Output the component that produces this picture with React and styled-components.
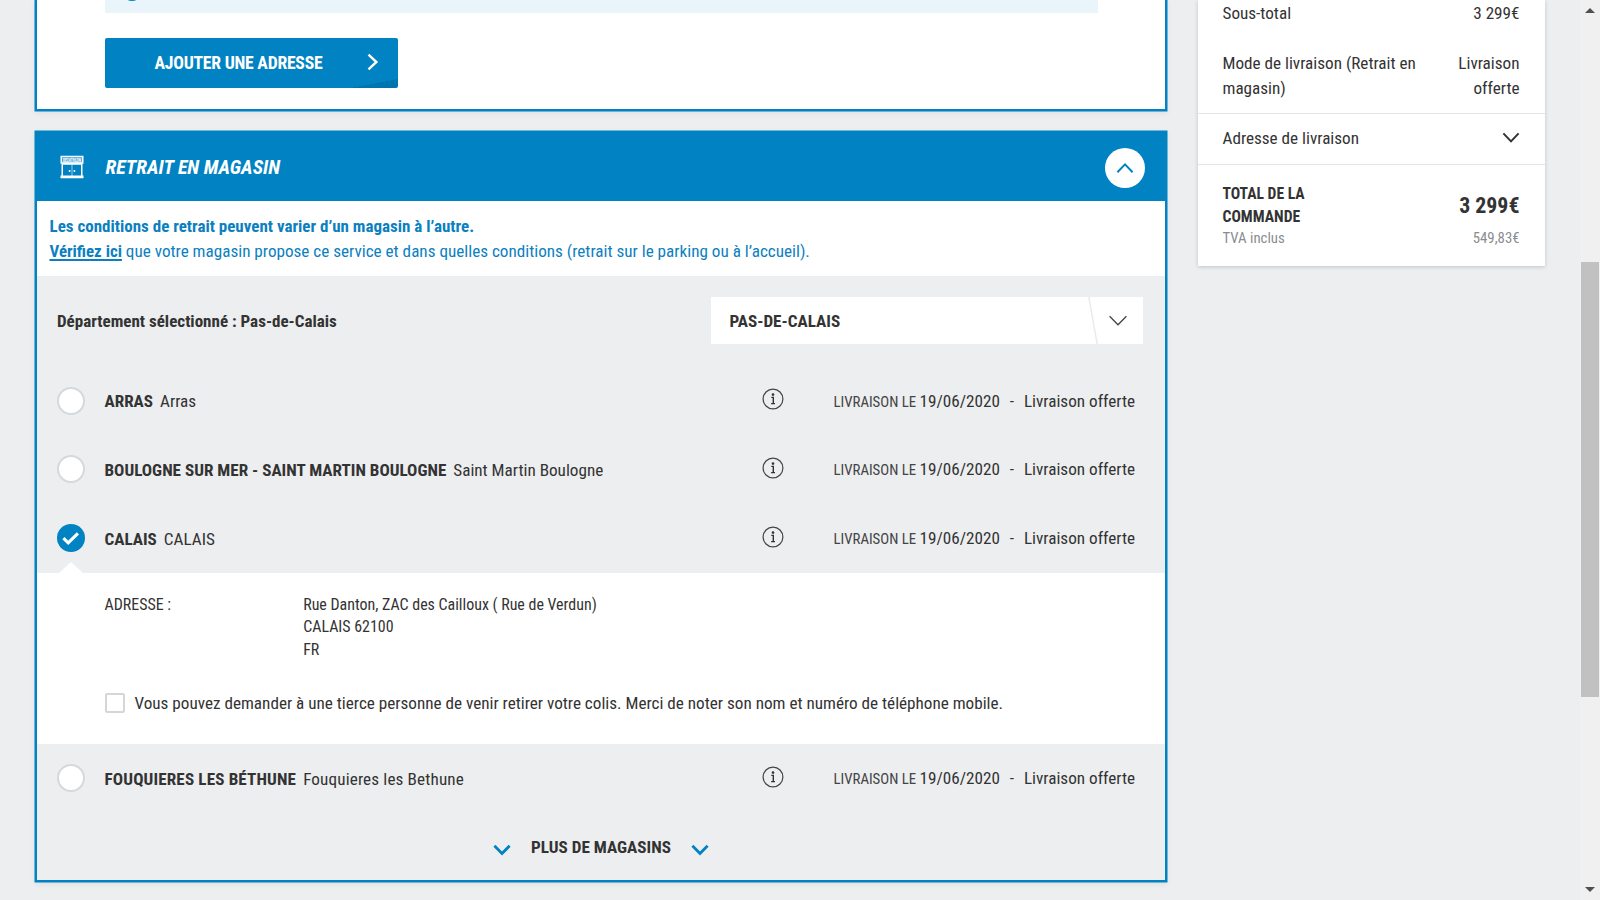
import React, { useState } from "react";
import styled, { createGlobalStyle, css } from "styled-components";

const stores = [
  { id: "arras", name: "ARRAS", city: "Arras" },
  {
    id: "boulogne",
    name: "BOULOGNE SUR MER - SAINT MARTIN BOULOGNE",
    city: "Saint Martin Boulogne"
  },
  {
    id: "calais",
    name: "CALAIS",
    city: "CALAIS",
    address: [
      "Rue Danton, ZAC des Cailloux ( Rue de Verdun)",
      "CALAIS 62100",
      "FR"
    ]
  },
  {
    id: "fouquieres",
    name: "FOUQUIERES LES BÉTHUNE",
    city: "Fouquieres les Bethune",
    tracking: "0.14px"
  }
];

function Chevron({ d, w, h, color, stroke }) {
  return (
    <Glyph width={w} height={h} viewBox={`0 0 ${w} ${h}`}>
      <path d={d} fill="none" stroke={color} strokeWidth={stroke} />
    </Glyph>
  );
}

function StoreIcon() {
  return (
    <Glyph width="24" height="24" viewBox="0 0 24 24">
      <path d="M0.5 0.8H23.5V8.8H22.5V20.5H23.5V23.2H0.5V20.5H1.5V8.8H0.5Z" fill="#fff" />
      <rect x="2" y="2.2" width="20" height="5" fill="#4ba5d4" />
      <text
        x="12"
        y="6.5"
        fontSize="5"
        fontWeight="700"
        fill="#fff"
        textAnchor="middle"
        textLength="18"
        lengthAdjust="spacingAndGlyphs"
      >
        DECATHLON
      </text>
      <path d="M3 9.8H11.7V20.5H3ZM12.3 9.8H21V20.5H12.3Z" fill="#0082c3" />
      <path d="M8.6 16H10.6M13.4 16H15.4M9.6 15V17M14.4 15V17" stroke="#fff" strokeWidth="1" />
    </Glyph>
  );
}

function InfoIcon() {
  return (
    <Glyph width="22" height="22" viewBox="0 0 22 22">
      <circle cx="11" cy="11" r="9.9" fill="none" stroke="#444" strokeWidth="1.2" />
      <circle cx="11" cy="6.6" r="1.3" fill="#333" />
      <path d="M9.3 9.4H11.3V15.4M9.1 15.6H13" fill="none" stroke="#333" strokeWidth="1.4" />
    </Glyph>
  );
}

function Store({ store, checked, onSelect }) {
  return (
    <StoreRow onClick={onSelect}>
      <Radio $checked={checked}>
        {checked && (
          <Glyph width="28" height="28" viewBox="0 0 28 28">
            <path d="M6.4 14.2L11.2 18.8L20.9 9.4" fill="none" stroke="#fff" strokeWidth="3.2" />
          </Glyph>
        )}
      </Radio>
      <StoreName $tracking={store.tracking}>
        <strong>{store.name}</strong>
        <span>{store.city}</span>
      </StoreName>
      <InfoCell>
        <InfoIcon />
      </InfoCell>
      <Shipping>
        <small>LIVRAISON LE</small>
        <span>19/06/2020</span>
        <Dash>-</Dash>
        <span>Livraison offerte</span>
      </Shipping>
      {checked && <Pointer />}
    </StoreRow>
  );
}

function App() {
  const [selected, setSelected] = useState("calais");

  return (
    <>
      <GlobalStyle />
      <Page>
        <Main>
          <AddressPanel>
            <Notice>
              <NoticeDot />
            </Notice>
            <AddButton>
              AJOUTER UNE ADRESSE
              <Chevron w={12} h={18} d="M1.5 1.6L9.4 9L1.5 16.4" color="#fff" stroke={2.4} />
            </AddButton>
          </AddressPanel>

          <Panel>
            <PanelHeader>
              <StoreIcon />
              <PanelTitle>RETRAIT EN MAGASIN</PanelTitle>
              <Toggle>
                <Chevron w={18} h={12} d="M1.4 10.2L9 2.4L16.6 10.2" color="#0082c3" stroke={2} />
              </Toggle>
            </PanelHeader>
            <Conditions>
              <p>
                <strong>Les conditions de retrait peuvent varier d’un magasin à l’autre.</strong>
              </p>
              <p>
                <CheckLink>Vérifiez ici</CheckLink> que votre magasin propose ce service et dans
                quelles conditions (retrait sur le parking ou à l’accueil).
              </p>
            </Conditions>
            <Department>
              <strong>Département sélectionné : Pas-de-Calais</strong>
              <Select>
                PAS-DE-CALAIS
                <SelectArrow>
                  <Glyph width="10" height="47" viewBox="0 0 10 47">
                    <path d="M0.8 0L9.2 47" stroke="#e9ebed" strokeWidth="1.5" />
                  </Glyph>
                  <Chevron w={18} h={12} d="M0.6 1.2L9 9.8L17.4 1.2" color="#444" stroke={1.3} />
                </SelectArrow>
              </Select>
            </Department>
            {stores.map(store => (
              <React.Fragment key={store.id}>
                <Store
                  store={store}
                  checked={selected === store.id}
                  onSelect={() => setSelected(store.id)}
                />
                {selected === store.id && store.address && (
                  <Details>
                    <Address>
                      <dt>ADRESSE :</dt>
                      <dd>
                        {store.address.map(line => (
                          <div key={line}>{line}</div>
                        ))}
                      </dd>
                    </Address>
                    <ThirdParty>
                      <Checkbox />
                      Vous pouvez demander à une tierce personne de venir retirer votre colis. Merci
                      de noter son nom et numéro de téléphone mobile.
                    </ThirdParty>
                  </Details>
                )}
              </React.Fragment>
            ))}
            <MoreStores>
              <Chevron w={18} h={12} d="M1.4 1.8L9 9.4L16.6 1.8" color="#0082c3" stroke={2.8} />
              PLUS DE MAGASINS
              <Chevron w={18} h={12} d="M1.4 1.8L9 9.4L16.6 1.8" color="#0082c3" stroke={2.8} />
            </MoreStores>
          </Panel>
        </Main>

        <Summary>
          <Lines>
            <Line>
              <span>Sous-total</span>
              <span>3 299€</span>
            </Line>
            <Line>
              <span>Mode de livraison (Retrait en magasin)</span>
              <span>Livraison offerte</span>
            </Line>
          </Lines>
          <DeliveryAddress>
            Adresse de livraison
            <Chevron w={18} h={12} d="M1.4 1.4L9 9.4L16.6 1.4" color="#333" stroke={2} />
          </DeliveryAddress>
          <Total>
            <TotalRow>
              <TotalLabel>TOTAL DE LA COMMANDE</TotalLabel>
              <TotalPrice>3 299€</TotalPrice>
            </TotalRow>
            <Vat>
              <span>TVA inclus</span>
              <span>549,83€</span>
            </Vat>
          </Total>
        </Summary>

        <Scrollbar>
          <ScrollArrow $up />
          <Thumb />
          <ScrollArrow />
        </Scrollbar>
      </Page>
    </>
  );
}

const GlobalStyle = createGlobalStyle`
  * {
    box-sizing: border-box;
  }

  body {
    margin: 0;
    background: #eceef0;
    color: #333;
    font-family: "Roboto Condensed", Roboto, "Liberation Sans", sans-serif;
    font-stretch: 75%;
    font-size: 17.15px;
    line-height: 25px;
    overflow: hidden;
  }

  p, dl, dd, h2 {
    margin: 0;
  }
`;

const Glyph = styled.svg`
  display: block;
  flex: none;
  overflow: visible;
`;

const Page = styled.div`
  display: flex;
  align-items: flex-start;
  height: 900px;
  padding-left: 35px;
  overflow: hidden;
`;

const Main = styled.main`
  width: 1132px;
`;

const Panel = styled.section`
  margin-bottom: 20px;
  border: 2px solid #0082c3;
  background: #eceef0;
  box-shadow: 0 0 0 0.5px #0082c3, 0 2px 6px rgba(0, 0, 0, 0.07);
`;

const AddressPanel = styled(Panel)`
  height: 111px;
  padding: 0 67.5px 0 68px;
  border-top: 0;
  background: #fff;
`;

const Notice = styled.div`
  display: flex;
  align-items: flex-end;
  height: 13px;
  margin-bottom: 25px;
  padding-left: 17px;
  background: #eaf4fb;
`;

const NoticeDot = styled.span`
  width: 20px;
  height: 20px;
  margin-bottom: 12px;
  border-radius: 50%;
  background: #0082c3;
`;

const AddButton = styled.button`
  display: flex;
  align-items: center;
  justify-content: space-between;
  width: 292.5px;
  height: 50px;
  padding: 0 19px 0 49.5px;
  border: 0;
  border-radius: 2px;
  background: linear-gradient(to bottom right, transparent 50%, #0074ae 51%) right bottom / 48px 9px
    no-repeat #0082c3;
  color: #fff;
  font: inherit;
  font-weight: 700;
  font-size: 17.7px;
  letter-spacing: -0.25px;

  svg {
    margin-top: -2px;
  }
`;

const PanelHeader = styled.header`
  display: flex;
  align-items: center;
  height: 68px;
  padding: 0 20px 0 23px;
  background: #0082c3;
`;

const PanelTitle = styled.h2`
  flex: 1;
  padding-left: 21.5px;
  color: #fff;
  font-size: 19.9px;
  font-style: italic;
  font-weight: 700;
`;

const Toggle = styled.button`
  display: flex;
  align-items: center;
  justify-content: center;
  width: 40px;
  height: 40px;
  margin-top: 1px;
  padding: 0;
  border: 0;
  border-radius: 50%;
  background: #fff;
`;

const Conditions = styled.div`
  height: 75px;
  padding: 13px 12.5px 0;
  background: #fff;
  color: #0c7fc0;
  white-space: nowrap;

  strong {
    font-size: 17px;
  }
`;

const CheckLink = styled.a`
  font-size: 16.9px;
  font-weight: 700;
  text-decoration: underline;
  text-decoration-thickness: 2px;
  text-underline-offset: 2px;
`;

const Department = styled.div`
  display: flex;
  align-items: center;
  justify-content: space-between;
  height: 91px;
  padding: 0 22px 0 20px;

  strong {
    font-size: 17.05px;
  }
`;

const Select = styled.div`
  display: flex;
  align-items: center;
  justify-content: space-between;
  width: 432px;
  height: 47px;
  margin-top: -2px;
  padding: 1px 16px 0 18.5px;
  background: #fff;
  font-weight: 700;
`;

const SelectArrow = styled.span`
  display: flex;
  align-items: center;
  gap: 11.5px;
  margin-top: -1px;
`;

const StoreRow = styled.div`
  position: relative;
  display: grid;
  grid-template-columns: 47.5px 657px 72px auto;
  align-items: center;
  height: 68.66px;
  padding-left: 20px;
`;

const Radio = styled.span`
  width: 28px;
  height: 28px;
  margin-top: -1px;
  border: 2px solid #d5d9dc;
  border-radius: 50%;
  background: #fff;

  ${p =>
    p.$checked &&
    css`
      border: 0;
      background: #0082c3;
    `}
`;

const StoreName = styled.div`
  display: flex;
  gap: 7px;
  padding-top: 1px;
  letter-spacing: ${p => p.$tracking || "normal"};

  strong {
    font-size: 17.1px;
  }
`;

const InfoCell = styled.div`
  margin-top: -4px;
`;

const Shipping = styled.div`
  display: flex;
  align-items: baseline;
  padding-top: 1px;
  white-space: nowrap;

  small {
    width: 86px;
    font-size: 14.8px;
    color: #444;
  }
`;

const Dash = styled.span`
  width: 24px;
  text-align: center;
`;

/* small notch that ties the open details to the selected store */
const Pointer = styled.span`
  position: absolute;
  left: 21.5px;
  bottom: 0;
  border: 12.5px solid transparent;
  border-top: 0;
  border-bottom: 11.5px solid #fff;
`;

const Details = styled.div`
  height: 171px;
  padding: 21px 0 0 67.5px;
  background: #fff;

  & + div {
    height: 70px;
  }
`;

const Address = styled.dl`
  display: grid;
  grid-template-columns: 198.7px auto;
  font-size: 15.95px;
  line-height: 22.4px;
`;

const ThirdParty = styled.label`
  display: flex;
  align-items: center;
  gap: 10px;
  margin-top: 29.5px;
`;

const Checkbox = styled.span`
  width: 20px;
  height: 20px;
  margin-top: -1px;
  border: 2px solid #d3d7da;
  border-radius: 2px;
  background: #fff;
`;

const MoreStores = styled.div`
  display: flex;
  align-items: center;
  justify-content: center;
  gap: 20px;
  height: 66px;
  padding-top: 1px;
  font-weight: 700;

  svg {
    margin-top: 5px;
  }
`;

const Summary = styled.aside`
  width: 347px;
  height: 266px;
  margin-left: 30.5px;
  background: #fff;
  box-shadow: 0 1px 4px rgba(0, 0, 0, 0.18);
`;

const Lines = styled.div`
  height: 113px;
  padding: 1px 25px 0;
`;

const Line = styled.div`
  display: flex;
  justify-content: space-between;
  margin-bottom: 25px;

  span:first-child {
    width: 215px;
  }

  span:last-child {
    width: 80px;
    text-align: right;
  }
`;

const DeliveryAddress = styled.div`
  display: flex;
  align-items: center;
  justify-content: space-between;
  height: 51.5px;
  padding: 0 25px;
  border-top: 1px solid #e3e5e7;
  border-bottom: 1px solid #e3e5e7;

  svg {
    margin-top: -2px;
  }
`;

const Total = styled.div`
  padding: 18.5px 25px 0;
`;

const TotalRow = styled.div`
  display: flex;
  justify-content: space-between;
  align-items: center;
  height: 45px;
  font-weight: 700;
`;

const TotalLabel = styled.span`
  width: 100px;
  font-size: 15.65px;
  line-height: 22.4px;
`;

const TotalPrice = styled.span`
  font-size: 21.9px;
`;

const Vat = styled.div`
  display: flex;
  justify-content: space-between;
  line-height: 21px;
  font-size: 14.8px;
  color: #8a8d90;
`;

const Scrollbar = styled.div`
  display: flex;
  flex-direction: column;
  align-items: center;
  width: 20px;
  height: 900px;
  margin-left: auto;
  padding: 8px 1px;
  background: #f0f0f0;
`;

const Thumb = styled.div`
  width: 18px;
  height: 435px;
  margin: 248.5px 0 auto;
  background: #c1c1c1;
`;

const ScrollArrow = styled.span`
  border: 5px solid transparent;
  ${p =>
    p.$up
      ? "border-top: 0; border-bottom-color: #505050;"
      : "border-bottom: 0; border-top-color: #505050;"}
`;

export default App;
